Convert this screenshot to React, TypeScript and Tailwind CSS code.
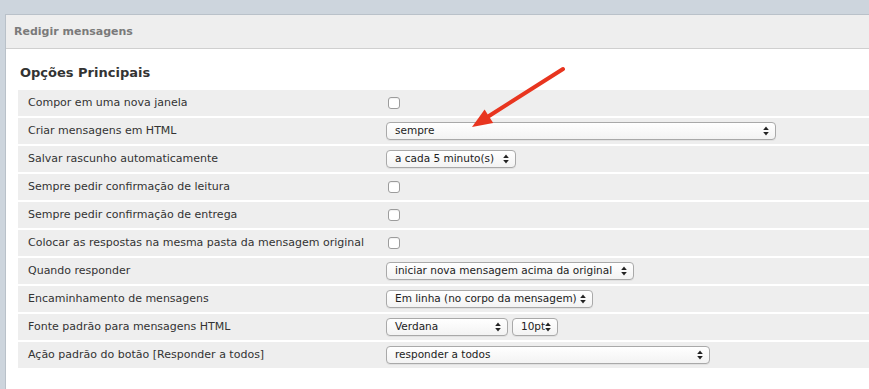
import React from "react";

const Chevron = () => (
  <svg width="6" height="10" viewBox="0 0 6 10" className="shrink-0">
    <path d="M3 0.5 L5.8 4 L0.2 4 Z" fill="#222" />
    <path d="M3 9.5 L5.8 6 L0.2 6 Z" fill="#222" />
  </svg>
);

const Sel = ({ w, text }: { w: string; text: string }) => (
  <div
    className={`${w} h-[18px] flex items-center justify-between pl-[8px] pr-[6px] rounded-[4px] border border-[#a9a9a9] bg-gradient-to-b from-white to-[#f3f3f3] text-[10.5px] text-[#222] shadow-[0_1px_0_rgba(0,0,0,0.05)]`}
  >
    <span className="whitespace-nowrap">{text}</span>
    <Chevron />
  </div>
);

const Check = () => (
  <div className="w-[12px] h-[12px] ml-[2px] rounded-[3px] border border-[#9c9c9c] bg-white shadow-[inset_0_1px_1px_rgba(0,0,0,0.06)]" />
);

const rows: { label: string; ctrl: React.ReactNode }[] = [
  { label: "Compor em uma nova janela", ctrl: <Check /> },
  { label: "Criar mensagens em HTML", ctrl: <Sel w="w-[390px]" text="sempre" /> },
  { label: "Salvar rascunho automaticamente", ctrl: <Sel w="w-[130px]" text="a cada 5 minuto(s)" /> },
  { label: "Sempre pedir confirmação de leitura", ctrl: <Check /> },
  { label: "Sempre pedir confirmação de entrega", ctrl: <Check /> },
  { label: "Colocar as respostas na mesma pasta da mensagem original", ctrl: <Check /> },
  { label: "Quando responder", ctrl: <Sel w="w-[248px]" text="iniciar nova mensagem acima da original" /> },
  { label: "Encaminhamento de mensagens", ctrl: <Sel w="w-[207px]" text="Em linha (no corpo da mensagem)" /> },
  {
    label: "Fonte padrão para mensagens HTML",
    ctrl: (
      <div className="flex gap-[4px]">
        <Sel w="w-[122px]" text="Verdana" />
        <Sel w="w-[46px]" text="10pt" />
      </div>
    ),
  },
  { label: "Ação padrão do botão [Responder a todos]", ctrl: <Sel w="w-[324px]" text="responder a todos" /> },
];

export default function App() {
  return (
    <div
      className="relative h-[389px] w-full overflow-hidden bg-[#cdd5dd] pt-[14px] pl-[5px]"
      style={{ fontFamily: '"DejaVu Sans", Verdana, sans-serif' }}
    >
      <div className="h-full bg-white border-l border-t border-[#b9c1c9]">
        <div className="h-[34px] bg-[#eeeeee] border-b border-[#cfcfcf] pl-[8px] pt-[1px] flex items-center text-[11px] font-bold text-[#7a7a7a]">
          Redigir mensagens
        </div>
        <div className="pl-[12px]">
          <h2 className="pt-[14px] pl-[2px] h-[41px] leading-[20px] text-[13px] font-bold text-[#333]">
            Opções Principais
          </h2>
          <div className="flex flex-col gap-[2px]">
            {rows.map((r) => (
              <div key={r.label} className="h-[26px] bg-[#eeeeee] flex items-center">
                <div className="w-[368px] pl-[10px] text-[11px] text-[#333] whitespace-nowrap">{r.label}</div>
                <div className="flex items-center">{r.ctrl}</div>
              </div>
            ))}
          </div>
        </div>
      </div>
      <svg className="absolute left-0 top-0 pointer-events-none" width="869" height="389">
        <line x1="563" y1="69" x2="489" y2="116" stroke="#e8351f" strokeWidth="4" strokeLinecap="round" />
        <polygon points="472,127 484.6,109.6 493.2,123" fill="#e8351f" />
      </svg>
    </div>
  );
}
